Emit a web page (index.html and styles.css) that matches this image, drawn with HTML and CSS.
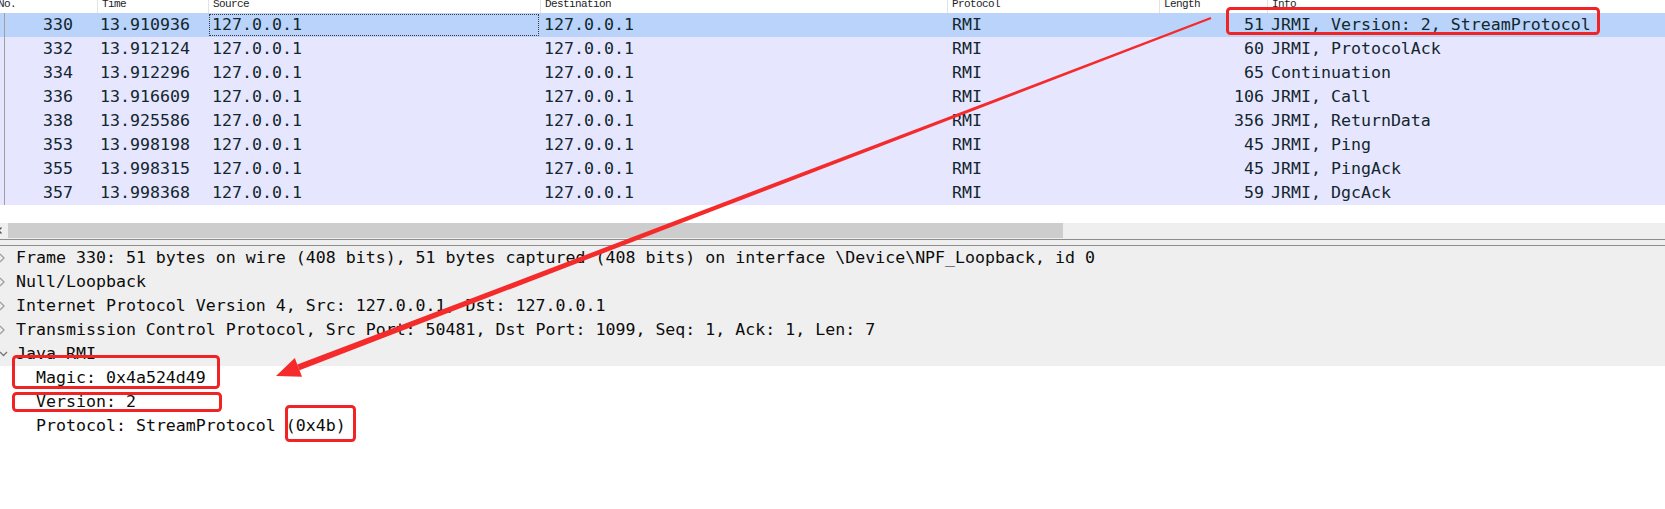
FILE: index.html
```html
<!DOCTYPE html>
<html>
<head>
<meta charset="utf-8">
<link rel="stylesheet" href="styles.css">
</head>
<body>
<div class="page">
  <div class="plist">
    <div class="phead">
      <div class="h h-no"><span>No.</span></div>
      <div class="h"><span>Time</span></div>
      <div class="h"><span>Source</span></div>
      <div class="h"><span>Destination</span></div>
      <div class="h"><span>Protocol</span></div>
      <div class="h"><span>Length</span></div>
      <div class="h"><span>Info</span></div>
    </div>
    <div class="prow sel">
      <div class="c c-no">330</div><div class="c c-time">13.910936</div><div class="c c-src focus">127.0.0.1</div><div class="c c-dst">127.0.0.1</div><div class="c c-proto">RMI</div><div class="c c-len">51</div><div class="c c-info">JRMI, Version: 2, StreamProtocol</div>
    </div>
    <div class="prow">
      <div class="c c-no">332</div><div class="c c-time">13.912124</div><div class="c c-src">127.0.0.1</div><div class="c c-dst">127.0.0.1</div><div class="c c-proto">RMI</div><div class="c c-len">60</div><div class="c c-info">JRMI, ProtocolAck</div>
    </div>
    <div class="prow">
      <div class="c c-no">334</div><div class="c c-time">13.912296</div><div class="c c-src">127.0.0.1</div><div class="c c-dst">127.0.0.1</div><div class="c c-proto">RMI</div><div class="c c-len">65</div><div class="c c-info">Continuation</div>
    </div>
    <div class="prow">
      <div class="c c-no">336</div><div class="c c-time">13.916609</div><div class="c c-src">127.0.0.1</div><div class="c c-dst">127.0.0.1</div><div class="c c-proto">RMI</div><div class="c c-len">106</div><div class="c c-info">JRMI, Call</div>
    </div>
    <div class="prow">
      <div class="c c-no">338</div><div class="c c-time">13.925586</div><div class="c c-src">127.0.0.1</div><div class="c c-dst">127.0.0.1</div><div class="c c-proto">RMI</div><div class="c c-len">356</div><div class="c c-info">JRMI, ReturnData</div>
    </div>
    <div class="prow">
      <div class="c c-no">353</div><div class="c c-time">13.998198</div><div class="c c-src">127.0.0.1</div><div class="c c-dst">127.0.0.1</div><div class="c c-proto">RMI</div><div class="c c-len">45</div><div class="c c-info">JRMI, Ping</div>
    </div>
    <div class="prow">
      <div class="c c-no">355</div><div class="c c-time">13.998315</div><div class="c c-src">127.0.0.1</div><div class="c c-dst">127.0.0.1</div><div class="c c-proto">RMI</div><div class="c c-len">45</div><div class="c c-info">JRMI, PingAck</div>
    </div>
    <div class="prow">
      <div class="c c-no">357</div><div class="c c-time">13.998368</div><div class="c c-src">127.0.0.1</div><div class="c c-dst">127.0.0.1</div><div class="c c-proto">RMI</div><div class="c c-len">59</div><div class="c c-info">JRMI, DgcAck</div>
    </div>
  </div>

  <div class="gap"></div>

  <div class="hscroll">
    <div class="sarrow"><svg width="10" height="15" viewBox="0 0 10 15"><path d="M3.5 4.5 L0.5 7.5 L3.5 10.5" fill="none" stroke="#555" stroke-width="1.3"/></svg></div>
    <div class="thumb"></div>
  </div>
  <div class="splitter"></div>

  <div class="details">
    <div class="drow top"><span class="tog"><svg width="16" height="24" viewBox="0 0 16 24"><path d="M0 8 L4 12 L0 16" fill="none" stroke="#a3a3a3" stroke-width="1.4"/></svg></span><span>Frame 330: 51 bytes on wire (408 bits), 51 bytes captured (408 bits) on interface \Device\NPF_Loopback, id 0</span></div>
    <div class="drow top"><span class="tog"><svg width="16" height="24" viewBox="0 0 16 24"><path d="M0 8 L4 12 L0 16" fill="none" stroke="#a3a3a3" stroke-width="1.4"/></svg></span><span>Null/Loopback</span></div>
    <div class="drow top"><span class="tog"><svg width="16" height="24" viewBox="0 0 16 24"><path d="M0 8 L4 12 L0 16" fill="none" stroke="#a3a3a3" stroke-width="1.4"/></svg></span><span>Internet Protocol Version 4, Src: 127.0.0.1, Dst: 127.0.0.1</span></div>
    <div class="drow top"><span class="tog"><svg width="16" height="24" viewBox="0 0 16 24"><path d="M0 8 L4 12 L0 16" fill="none" stroke="#a3a3a3" stroke-width="1.4"/></svg></span><span>Transmission Control Protocol, Src Port: 50481, Dst Port: 1099, Seq: 1, Ack: 1, Len: 7</span></div>
    <div class="drow top"><span class="tog"><svg width="16" height="24" viewBox="0 0 16 24"><path d="M0 10 L3.5 13.5 L7 10" fill="none" stroke="#7a7a7a" stroke-width="1.4"/></svg></span><span>Java RMI</span></div>
    <div class="drow child">Magic: 0x4a524d49</div>
    <div class="drow child">Version: 2</div>
    <div class="drow child">Protocol: StreamProtocol (0x4b)</div>
  </div>

  <svg class="annot" width="1665" height="509" viewBox="0 0 1665 509">
    <g fill="none" stroke="#f02424" stroke-width="3">
      <rect x="1227.5" y="8.5" width="371" height="25" rx="3"/>
      <rect x="13.5" y="356.5" width="205" height="31" rx="3"/>
      <rect x="13.5" y="393.5" width="207" height="17" rx="3"/>
      <rect x="286.5" y="406.5" width="68" height="34" rx="3"/>
    </g>
    <g fill="#f52a2a">
      <polygon points="1211.4,18.9 1210.6,17.1 297.3,364.6 299.5,370.2"/>
      <polygon points="276,376 302,376.7 294.8,358.1"/>
    </g>
  </svg>
</div>
</body>
</html>
```

FILE: styles.css
```css
html, body {
  margin: 0;
  padding: 0;
  background: #ffffff;
}

.page {
  position: relative;
  width: 1665px;
  height: 509px;
  overflow: hidden;
  font-family: "DejaVu Sans Mono", "Liberation Mono", monospace;
}

/* ---------- packet list ---------- */
.phead,
.prow {
  display: grid;
  grid-template-columns: 97px 111px 332px 407px 212px 108px 1fr;
}

.phead {
  height: 13px;
  overflow: hidden;
  background: #ffffff;
  font-family: "Liberation Mono", monospace;
  font-size: 11px;
  line-height: 13px;
  letter-spacing: -0.6px;
  color: #1e1e1e;
}

.phead .h {
  border-left: 1px solid #e3e3e3;
  padding-left: 4px;
  overflow: hidden;
  white-space: nowrap;
}

.phead .h-no {
  border-left: none;
  padding-left: 0;
  margin-left: -2px;
}

.phead .h span {
  display: block;
  margin-top: -2px;
}

.prow {
  height: 24px;
  line-height: 24px;
  font-size: 16.6px;
  color: #12272e;
  background: #e7e6ff;
}

.prow.sel {
  background: #bad3fb;
}

.prow .c {
  white-space: pre;
  overflow: hidden;
}

.c-no {
  text-align: right;
  padding-right: 24px;
  background-image: linear-gradient(to right, transparent 4px, #9f9f9f 4px, #9f9f9f 5px, transparent 5px);
}

.c-time { padding-left: 3px; }
.c-src { padding-left: 4px; }
.c-dst { padding-left: 4px; }
.c-proto { padding-left: 5px; }
.c-len { text-align: right; padding-right: 3px; }
.c-info { padding-left: 4px; }

.focus {
  outline: 1px dotted #3a3a3a;
  outline-offset: -2px;
}

/* ---------- gap and scrollbar ---------- */
.gap {
  height: 18px;
  background: #ffffff;
}

.hscroll {
  height: 16px;
  background: #efefef;
  display: flex;
}

.sarrow {
  width: 10px;
  height: 15px;
  flex: none;
  margin-left: -2px;
}

.sarrow svg {
  display: block;
}

.thumb {
  width: 1055px;
  height: 15px;
  background: #cdcdcd;
}

.splitter {
  height: 5px;
  background: #efefef;
  border-top: 1px solid #8e8e8e;
  border-bottom: 1px solid #8e8e8e;
}

/* ---------- packet details ---------- */
.drow {
  height: 24px;
  line-height: 24px;
  font-size: 16.6px;
  color: #0c0c0c;
  white-space: pre;
  display: flex;
}

.drow.top {
  background: #efefef;
}

.tog {
  width: 16px;
  height: 24px;
  flex: none;
}

.tog svg {
  display: block;
}

.drow.child {
  padding-left: 36px;
}

/* ---------- annotation overlay ---------- */
.annot {
  position: absolute;
  left: 0;
  top: 0;
  pointer-events: none;
}
```
